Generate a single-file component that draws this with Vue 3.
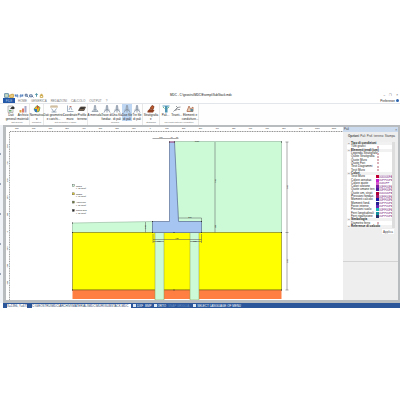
<template>
  <div class="app">
    <header class="titlebar">
      <div class="quick">
        <button v-for="q in quick" :key="q.label" class="quick-btn" :aria-label="q.label">
          <svg viewBox="0 0 8 8"><path :d="q.d" :stroke="q.color" :fill="q.fill || 'none'" stroke-width="1.4" /></svg>
        </button>
      </div>
      <h1 class="title">MDC - C:\geostru\MDC\Esempi\SubStack.mdc</h1>
      <div class="window-btns">
        <button aria-label="Minimize">–</button>
        <button aria-label="Restore">❐</button>
        <button aria-label="Close">×</button>
      </div>
    </header>

    <nav class="tabs">
      <button class="tab file">FILE</button>
      <button v-for="t in tabs" :key="t" class="tab">{{ t }}</button>
      <span class="pref">Preferenze <i class="pref-icon"></i></span>
    </nav>

    <div class="ribbon">
      <section v-for="g in groups" :key="g.name" class="group">
        <div class="tools">
          <button
            v-for="(t, i) in g.tools"
            :key="i"
            class="tool"
            :class="{ active: t.active }"
            :style="{ width: t.w + 'px' }"
          >
            <svg class="tool-icon" viewBox="0 0 16 16">
              <path
                v-for="(p, n) in icons[t.icon]"
                :key="n"
                :d="p.d"
                :fill="p.fill || 'none'"
                :stroke="p.stroke || 'none'"
                stroke-width="1.6"
              />
            </svg>
            <span v-for="line in t.text" :key="line">{{ line }}</span>
          </button>
        </div>
        <div class="group-name">{{ g.name }}</div>
      </section>
    </div>

    <main class="work">
      <aside class="rail"><i v-for="n in 5" :key="n"></i></aside>
      <div class="frame">
        <svg class="canvas" viewBox="6 127 337 173" preserveAspectRatio="xMinYMin meet">
          <rect x="6" y="127" width="337" height="173" fill="#fff" />
          <!-- rulers -->
          <path d="M10 131.500H343" stroke="#8a8a8a" stroke-dasharray="1 0.680" />
          <path d="M9.500 132V300" stroke="#999" stroke-dasharray="1 0.720" />
          <text v-for="n in 20" :key="'h' + n" :x="16.7 * n" y="129" class="num">{{ (n - 9) * 100 }}</text>
          <text
            v-for="n in 9"
            :key="'v' + n"
            class="num"
            :transform="`translate(8 ${129 + 17.1 * n}) rotate(-90)`"
          >{{ (6 - n) * 100 }}</text>

          <!-- ground layers -->
          <path d="M72.500 223L152.500 221.500V232.500H72.500Z" fill="#ccf9d6" stroke="#7fa78a" stroke-width=".5" />
          <path d="M174 141.500H281.500V232.500H201V221.500H178.500Z" fill="#ccf9d6" stroke="#7fa78a" stroke-width=".5" />
          <rect x="72.500" y="232.500" width="209" height="57.500" fill="#ff0" stroke="#77731a" stroke-width=".6" />
          <rect x="72.500" y="290" width="209" height="9" fill="#ff7f42" />
          <path d="M72.500 290H281.500" stroke="#7a5426" stroke-width=".6" />

          <!-- piles, wall and footing -->
          <rect x="155" y="232.500" width="9" height="67.500" fill="#ccf9d6" stroke="#8d9a4e" stroke-width=".5" />
          <rect x="190" y="232.500" width="9" height="67.500" fill="#ccf9d6" stroke="#8d9a4e" stroke-width=".5" />
          <path
            d="M169.500 142H174.500L178.500 221.500H201.500V232.500H152.500V221.500H169.500Z"
            fill="#a6c5f1"
            stroke="#5c7096"
            stroke-width=".7"
          />
          <path d="M169 142H175" stroke="#b3568d" />

          <!-- dimensions -->
          <g class="dim">
            <path d="M152.500 138.500H178.500M215 142V232.500M287 142V290M285.500 142H288.500M285.500 232.500H288.500M285.500 290H288.500" />
            <path d="M178.500 218H201.500V221M145.500 222V232.500M153 239.500H201.500M153 241.500H164M190 241.500H201.500M153 234V243M201.500 234V243" />
          </g>
          <g class="mark">
            <rect v-for="(m, i) in marks" :key="i" :x="m[0] - 0.5" :y="m[1] - 0.5" width="1" height="1" />
          </g>
          <text v-for="(d, i) in dims" :key="'d' + i" :x="d[0]" :y="d[1]" class="num">{{ d[2] }}</text>
          <text
            v-for="(d, i) in sideDims"
            :key="'s' + i"
            class="num"
            :transform="`translate(${d[0]} ${d[1]}) rotate(-90)`"
          >{{ d[2] }}</text>

          <!-- soil legend -->
          <g v-for="(l, i) in legend" :key="l.name">
            <rect x="72.300" :y="184.5 + 8.3 * i" width="2" height="2" :fill="l.color" stroke="#555" stroke-width=".4" />
            <text x="76" :y="186.5 + 8.3 * i" class="note">{{ l.name }}</text>
            <text x="76" :y="189 + 8.3 * i" class="note">{{ l.value }}</text>
          </g>
        </svg>

        <aside class="panel">
          <div class="panel-head"><span>Pali</span><button aria-label="Close panel">×</button></div>
          <div class="panel-tabs">
            <button class="on">Opzioni</button><button>Pali</button><button>Prof. terreno</button><button>Stampa</button>
          </div>
          <div class="props">
            <div v-for="(r, i) in rows" :key="i" class="row" :class="{ head: r.head }">
              <span class="sign">{{ r.head ? '−' : '' }}</span>
              <span v-if="r.head" class="row-title">{{ r.name }}</span>
              <label v-else :for="'p' + i">{{ r.name }}</label>
              <span v-if="!r.head" class="val">
                <template v-if="r.color">
                  <i class="swatch" :style="{ background: r.color }"></i>
                  <input :id="'p' + i" class="code" :value="r.code" />
                </template>
                <input v-else :id="'p' + i" class="check" type="checkbox" />
              </span>
            </div>
          </div>
          <button class="apply">Applica</button>
        </aside>
      </div>
    </main>

    <footer class="status">
      <span class="cell coord">X=1396, Y=675</span>
      <span class="cell path">C:\GEOSTRU\MDC\ARCHIVI\MATERIALI\MDC\MURI\SUBSTACK.MDC</span>
      <button><i class="box"></i>DXF</button>
      <button>BMP</button>
      <button><i class="box"></i>ORTO</button>
      <button class="dim-text">SNAP GRIGLIA</button>
      <button class="lang"><i class="box"></i>SELECT LANGUAGE OF MENU</button>
    </footer>
  </div>
</template>

<script setup>
const tabs = ['HOME', 'GENERICA', 'REDAZIONI', 'CALCOLO', 'OUTPUT', '?']

const quick = [
  { label: 'App', d: 'M1 1H7V7H1Z', color: '#5b87a5', fill: '#c9dcc4' },
  { label: 'Open', d: 'M1 3H4V2H7V7H1Z', color: '#c99b3d', fill: '#efd38b' },
  { label: 'Undo', d: 'M2 2V5H5M2 5L4 3H6V7', color: '#3d6fb5' },
  { label: 'Redo', d: 'M6 2V5H3M6 5L4 3H2V7', color: '#3d6fb5' },
  { label: 'Zoom', d: 'M2 2H5V5H2ZM5 5L7 7', color: '#43618f' },
  { label: 'Zoom all', d: 'M1 3H5V6H1ZM5 5L7 7', color: '#43618f' },
  { label: 'Pan', d: 'M4 1V6M2 3L4 1L6 3', color: '#3f8aa0' },
  { label: 'Lock', d: 'M2 4H6V7H2ZM3 4V2H5V4', color: '#c7a13c' }
]

const icons = {
  page: [
    { d: 'M2 2H12V15H2Z', fill: '#eef0f2', stroke: '#aaa' },
    { d: 'M7 8L10 4H14V8', fill: '#333', stroke: '#333' },
    { d: 'M4 10H9V13H4Z', fill: '#68a968' }
  ],
  bars: [
    { d: 'M1 10H5V15H1Z', fill: '#e2a33c' },
    { d: 'M6 7H10V15H6Z', fill: '#dd7a68' },
    { d: 'M11 2H15V15H11Z', fill: '#a6a7c9' }
  ],
  norm: [
    { d: 'M8 1L14 5L12 13L6 14L2 8Z', fill: '#efb51d', stroke: '#5b9650' },
    { d: 'M2 8H8V14H4Z', fill: '#3277b9' },
    { d: 'M8 1L12 4L8 8Z', fill: '#c94734' }
  ],
  geometry: [
    { d: 'M1 2H15M2 2V6M6 2V6M10 2V6M14 2V6', stroke: '#b99c6f' },
    { d: 'M3 7L8 14L13 7M3 14H13', stroke: '#8296aa' }
  ],
  coords: [
    { d: 'M3 1V13H15M6 10L9 3L12 10', stroke: '#8ca0b5' },
    { d: 'M7 3H11', stroke: '#c46a5d' }
  ],
  soil: [
    { d: 'M1 11L5 4H15L12 11Z', fill: '#3a3530', stroke: '#5b5046' },
    { d: 'M4 9H12', stroke: '#86705a' }
  ],
  wall: [
    { d: 'M7 1H9L10 10H6Z', fill: '#c8d1dc', stroke: '#8a97a6' },
    { d: 'M2 13L5 10H12L14 13Z', stroke: '#8a97a6' }
  ],
  piles: [
    { d: 'M7 1H9L10 9H6Z', fill: '#b9c4d2', stroke: '#8793a3' },
    { d: 'M3 10H13M5 10L2 15M8 10V15M11 10L14 15', stroke: '#8793a3' }
  ],
  strata: [
    { d: 'M1 12L5 8L15 10L12 15H1Z', fill: '#8f3f20' },
    { d: 'M6 7L10 1L14 3L12 9Z', fill: '#c25a2b', stroke: '#7a3519' }
  ],
  pile: [
    { d: 'M1 2H15', stroke: '#3187ae' },
    { d: 'M6 2H11V15H6Z', fill: '#4995b2' },
    { d: 'M2 4L5 7M14 4L11 7', stroke: '#4ca370' }
  ],
  anchor: [{ d: 'M1 13L9 5L15 4M6 2L9 5L5 12M9 9H14', stroke: '#7c8087' }],
  elements: [
    { d: 'M2 12L6 2L9 8L14 4V13H2Z', fill: '#e8cdb7', stroke: '#af6b4b' },
    { d: 'M9 8H14V13H9Z', fill: '#5f8d9e' }
  ]
}

const groups = [
  {
    name: 'Dati generali',
    tools: [
      { w: 12, icon: 'page', text: ['Dati', 'generali'] },
      { w: 12, icon: 'bars', text: ['Archivio', 'materiali'] }
    ]
  },
  { name: 'Normativa', tools: [{ w: 13, icon: 'norm', text: ['Normativa', '▾'] }] },
  {
    name: 'Dati geometrici e carichi',
    tools: [
      { w: 19, icon: 'geometry', text: ['Dati geometrici', 'e carichi...'] },
      { w: 14, icon: 'coords', text: ['Coordinate', 'muro'] },
      { w: 10, icon: 'soil', text: ['Profilo', 'terreno'] }
    ]
  },
  {
    name: 'Tipologia',
    tools: [
      { w: 13, icon: 'wall', text: ['A mensola'] },
      { w: 11, icon: 'piles', text: ['Trave di', 'fondaz.'] },
      { w: 10, icon: 'piles', text: ['Una fila', 'di pali'] },
      { w: 10, icon: 'piles', text: ['Due file', 'di pali'], active: true },
      { w: 10, icon: 'piles', text: ['Tre file', 'di pali'] }
    ]
  },
  { name: 'Stratigrafia', tools: [{ w: 16, icon: 'strata', text: ['Stratigrafia', '▾'] }] },
  {
    name: 'Pali Tiranti Materiali e condutture',
    tools: [
      { w: 11, icon: 'pile', text: ['Pali...'] },
      { w: 11, icon: 'anchor', text: ['Tiranti...'] },
      { w: 16, icon: 'elements', text: ['Elementi e', 'condutture...'] }
    ]
  }
]

const marks = [
  [72.5, 223], [72.5, 232.5], [72.5, 290], [281.5, 142], [281.5, 232.5], [281.5, 290],
  [152.5, 221.5], [152.5, 232.5], [201.5, 221.5], [201.5, 232.5], [174, 290], [174, 232.5],
  [169.5, 142], [174.5, 142]
]

const dims = [
  [161, 138, '160'], [171.5, 138, '40'], [177, 138, '30'], [197, 142, '1070'],
  [190, 217.5, '200'], [177, 239, '430'], [159, 242, '100'], [195, 242, '100']
]

const sideDims = [
  [215.5, 181, '700'], [215.5, 226.5, '100'], [146, 227, '100'], [287.5, 187, '800'], [287.5, 261, '500']
]

const legend = [
  { name: 'Ghiaia', value: 'γ=18 kN/m³', color: '#ccf9d6' },
  { name: 'Sabbia', value: 'γ=19 kN/m³', color: '#e6cf25' },
  { name: 'Argilla limo', value: 'γ=20 kN/m³', color: '#74813c' },
  { name: 'Roccia dura', value: 'γ=21 kN/m³', color: '#222' }
]

const rows = [
  { name: 'Tipo di condizioni', head: true },
  { name: 'Tutti grafici' },
  { name: 'Elementi tendi (cm)', head: true },
  { name: 'Legenda Stratigrafia' },
  { name: 'Quote Stratigrafia' },
  { name: 'Quote Muro' },
  { name: 'Quote Fori' },
  { name: 'Testi Diagrammi' },
  { name: 'Testi Muro' },
  { name: 'Colori', head: true },
  { name: 'Testi Muro', color: '#c00030', code: '000000FA' },
  { name: 'Colore annotaz.', color: '#c71fd0', code: '00FF00FA' },
  { name: 'Colore quote', color: '#d25ac8', code: '0080FF' },
  { name: 'Colori sezione', color: '#7a1fa2', code: '00FF00FA' },
  { name: 'Quote umane terr.', color: '#4c1a9b', code: '00FF00FA' },
  { name: 'Quote um. strati', color: '#b00038', code: '000000FA' },
  { name: 'Pressioni fondaz.', color: '#a31b6d', code: '00FF00FA' },
  { name: 'Momenti calcolo', color: '#171ba4', code: '00FF00FA' },
  { name: 'Momenti fond.', color: '#26208e', code: '00FF00FA' },
  { name: 'Forze interne', color: '#6426b8', code: '00FF00FA' },
  { name: 'Pressioni suolo', color: '#18b9b9', code: '00FF00FA' },
  { name: 'Ferri longitudinali', color: '#128f9d', code: '00FF00FA' },
  { name: 'Ferri ripartizione', color: '#26306b', code: '00FF00FA' },
  { name: 'Simbologia', head: true },
  { name: 'Diametro ferro' },
  { name: 'Reference di calcolo', head: true }
]
</script>

<style>
body {
  margin: 0;
  background: #fff;
}
</style>

<style scoped>
.app {
  padding-top: 92px;
  font-family: "Liberation Sans", Arial, sans-serif;
  font-size: 3px;
  line-height: 4px;
  color: #444;
}

button {
  padding: 0;
  border: 0;
  background: none;
  font: inherit;
  color: inherit;
  white-space: nowrap;
}

.titlebar {
  display: grid;
  grid-template-columns: 1fr auto 1fr;
  align-items: center;
  height: 6px;
  padding: 0 2px 0 4px;
}

.quick {
  display: flex;
}

.quick-btn {
  display: flex;
  width: 5px;
}

.quick-btn svg {
  width: 5px;
  height: 5px;
}

.title {
  margin: 0;
  font-size: 3px;
  font-weight: 400;
  color: #111;
}

.window-btns {
  display: flex;
  justify-content: flex-end;
  gap: 4px;
}

.tabs {
  display: flex;
  align-items: center;
  height: 6px;
  padding: 0 1px 0 3px;
  border-bottom: 1px solid #e3e6ea;
  box-sizing: border-box;
  color: #777;
}

.tab {
  padding: 0 2px;
}

.tab.file {
  width: 12px;
  height: 5px;
  margin-right: 1px;
  padding: 0;
  background: #2458a6;
  color: #b9cbe6;
}

.pref {
  display: flex;
  align-items: center;
  gap: 1px;
  margin-left: auto;
  color: #222;
}

.pref-icon {
  width: 3px;
  height: 3px;
  border-radius: 50%;
  background: #2e63ad;
}

.ribbon {
  display: flex;
  height: 21px;
  padding-left: 5px;
  background: #fefefe;
}

.group {
  display: flex;
  flex-direction: column;
  border-right: 1px solid #e8e8e8;
}

.tools {
  display: flex;
  height: 17px;
}

.tool {
  display: flex;
  flex-direction: column;
  align-items: center;
  padding-top: 1px;
  line-height: 4px;
  color: #222;
}

.tool.active {
  background: #bfd7f3;
}

.tool-icon {
  width: 8px;
  height: 8px;
}

.group-name {
  font-size: 2px;
  line-height: 3px;
  text-align: center;
  color: #666;
}

.work {
  display: flex;
}

.rail {
  display: flex;
  flex-direction: column;
  justify-content: space-evenly;
  width: 3px;
  background: #f0f3f8;
}

.rail i {
  width: 1px;
  height: 2px;
  background: #98a3b5;
}

.frame {
  display: flex;
  flex: 1;
  min-width: 0;
  border: solid #b9bcbf;
  border-width: 2px 2px 3px 3px;
}

.canvas {
  display: block;
  flex: 1;
  min-width: 0;
  height: 173px;
}

.num {
  font-size: 2px;
  text-anchor: middle;
  fill: #111;
}

.note {
  font-size: 2px;
  fill: #111;
}

.dim {
  fill: none;
  stroke: #555;
  stroke-width: 0.5;
}

.mark {
  fill: #333;
}

.panel {
  display: flex;
  flex-direction: column;
  width: 55px;
  background: #eee;
}

.panel-head {
  display: flex;
  justify-content: space-between;
  height: 5px;
  padding: 0 1px;
  background: #cbdaec;
}

.panel-tabs {
  display: flex;
  justify-content: space-between;
  height: 5px;
  margin: 1px 3px 4px 5px;
}

.panel-tabs .on {
  font-weight: 700;
}

.props {
  display: grid;
  grid-auto-rows: 1fr;
  height: 86px;
  margin: 0 3px 0 4px;
  background: #fff;
  border-right: 3px solid #ddd;
}

.row {
  display: grid;
  grid-template-columns: 4px 25px 1fr;
  align-items: center;
  min-height: 0;
  line-height: 3px;
  white-space: nowrap;
  color: #222;
}

.row.head {
  background: #f1f1f1;
  font-weight: 700;
}

.sign {
  text-align: center;
}

.val {
  display: flex;
  align-items: center;
  min-width: 0;
}

.check {
  appearance: none;
  margin: 0 0 0 1px;
  width: 2px;
  height: 2px;
  border: 1px solid #d9b0b8;
  box-sizing: border-box;
}

.swatch {
  flex: none;
  width: 3px;
  height: 3px;
}

.code {
  flex: 1;
  min-width: 0;
  height: 3px;
  margin: 0;
  padding: 0;
  border: 0;
  background: none;
  font: inherit;
  color: #7b2b86;
}

.apply {
  align-self: flex-end;
  width: 12px;
  height: 5px;
  margin: 1px 4px 0 0;
  background: #fff;
}

.panel::after {
  content: "";
  height: 27px;
  border-bottom: 1px solid #d3d3d3;
}

.status {
  display: flex;
  align-items: center;
  height: 5px;
  margin-left: 3px;
  padding-left: 4px;
  background: #2b579a;
  color: #fff;
  white-space: nowrap;
}

.status button {
  display: flex;
  flex: none;
  align-items: center;
  gap: 1px;
  margin-left: 2px;
}

.cell {
  flex: none;
  height: 4px;
  background: #fff;
  color: #223a66;
}

.coord {
  width: 20px;
  margin-right: 5px;
}

.path {
  width: 99px;
}

.box {
  width: 3px;
  height: 3px;
  background: #dfe8f5;
}

.status .dim-text {
  color: #6f8fc0;
}

.status .lang {
  margin-left: 4px;
}
</style>
